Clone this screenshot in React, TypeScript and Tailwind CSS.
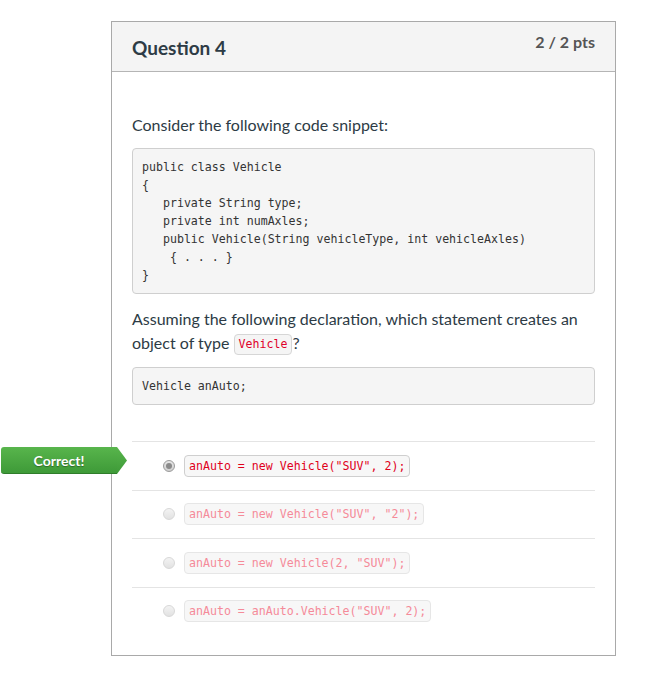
const mono = { fontFamily: '"DejaVu Sans Mono", monospace' };

const codeLines = [
  "public class Vehicle",
  "{",
  "   private String type;",
  "   private int numAxles;",
  "   public Vehicle(String vehicleType, int vehicleAxles)",
  "    { . . . }",
  "}",
];

const answers = [
  { text: 'anAuto = new Vehicle("SUV", 2);', picked: true },
  { text: 'anAuto = new Vehicle("SUV", "2");', picked: false },
  { text: 'anAuto = new Vehicle(2, "SUV");', picked: false },
  { text: 'anAuto = anAuto.Vehicle("SUV", 2);', picked: false },
];

const CorrectFlag = () => (
  <div className="absolute left-[-131px] top-[5px] flex h-[27px] items-stretch">
    <div className="flex w-[116px] items-center justify-center rounded-l-[3px] border-b border-[#2f7d2b] bg-gradient-to-b from-[#58b54c] to-[#3e9a38] text-[14px] font-bold text-white [text-shadow:0_1px_1px_rgba(0,0,0,0.35)]">
      Correct!
    </div>
    <div className="h-[27px] w-[10px] bg-gradient-to-b from-[#58b54c] to-[#3e9a38] [clip-path:polygon(0_0,100%_50%,0_100%)]" />
  </div>
);

const Radio = ({ picked }: { picked: boolean }) => (
  <span
    className={`flex h-[12px] w-[12px] shrink-0 items-center justify-center rounded-full border ${
      picked ? "border-[#9a9a9a] bg-gradient-to-b from-[#e6e6e6] to-[#cfcfcf]" : "border-[#d8d8d8] bg-gradient-to-b from-[#f3f3f3] to-[#e2e2e2]"
    }`}
  >
    {picked && <span className="h-[6px] w-[6px] rounded-full bg-[#8a8a8a]" />}
  </span>
);

export default function App() {
  return (
    <div className="min-h-screen bg-white pt-[21px] pl-[111px] pb-[22px]" style={{ fontFamily: "Lato, 'Open Sans', sans-serif" }}>
      <div className="w-[505px] border border-[#a9a9a9] bg-white text-[#2d3b45]">
        <div className="flex h-[50px] justify-between border-b border-[#b5b5b5] bg-[#f4f4f4] pl-[20px] pr-[20px]">
          <h2 className="pt-[14px] text-[19px] font-bold leading-[24px] text-[#2d3b45]">Question 4</h2>
          <span className="pt-[8px] text-[16px] font-bold leading-[24px] text-[#555]">2 / 2 pts</span>
        </div>

        <div className="px-[20px] pt-[41px] pb-[20px]">
          <p className="text-[16px] leading-[24px]">Consider the following code snippet:</p>

          <pre
            className="mt-[11px] rounded-[4px] border border-[#cfcfcf] bg-[#f5f5f5] pt-[9px] pb-[9px] pl-[9px] text-[11.6px] leading-[18px] text-[#333]"
            style={mono}
          >
            {codeLines.join("\n")}
          </pre>

          <p className="mt-[13px] text-[16px] leading-[24px]">
            Assuming the following declaration, which statement creates an object of type{" "}
            <code
              className="inline-block rounded-[4px] border border-[#d6d6d6] bg-[#f5f5f5] px-[4px] align-[1px] text-[11.6px] leading-[19px] text-[#e0002a]"
              style={mono}
            >
              Vehicle
            </code>
            ?
          </p>

          <pre
            className="mt-[12px] rounded-[4px] border border-[#cfcfcf] bg-[#f5f5f5] pt-[9px] pb-[9px] pl-[9px] text-[11.6px] leading-[18px] text-[#333]"
            style={mono}
          >
            Vehicle anAuto;
          </pre>

          <div className="mt-[36px]">
            {answers.map((a) => (
              <div key={a.text} className="relative flex h-[48.5px] items-center gap-[9px] border-t border-[#e4e4e4] pl-[31px]">
                {a.picked && <CorrectFlag />}
                <Radio picked={a.picked} />
                <code
                  className={`rounded-[4px] border bg-[#f7f7f7] px-[4px] leading-[20px] text-[11.6px] ${
                    a.picked ? "border-[#cfcfcf] text-[#e0001b]" : "border-[#e6e6e6] text-[#f58a99]"
                  }`}
                  style={mono}
                >
                  {a.text}
                </code>
              </div>
            ))}
          </div>
        </div>
      </div>
    </div>
  );
}
